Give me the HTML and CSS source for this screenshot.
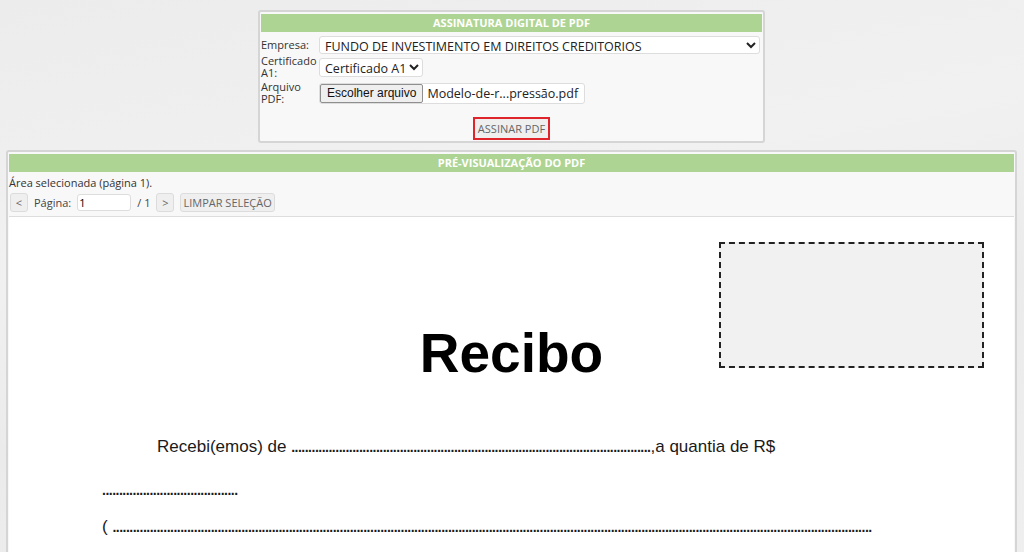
FILE: index.html
```html
<!DOCTYPE html>
<html lang="pt-BR">

<head>
    <meta charset="UTF-8">
    <meta name="viewport" content="width=device-width, initial-scale=1.0">
    <title>Assinatura Digital de PDF</title>
    <link rel="stylesheet" href="styles.css">
</head>

<body>
    <div class="panel sign-panel">
        <div class="panel-title">ASSINATURA DIGITAL DE PDF</div>
        <form id="signForm" class="sign-form">
            <label for="empresa">Empresa:</label>
            <div class="field">
                <select id="empresa" class="select-wide">
                    <option>FUNDO DE INVESTIMENTO EM DIREITOS CREDITORIOS</option>
                </select>
            </div>

            <label for="certificado">Certificado A1:</label>
            <div class="field">
                <select id="certificado">
                    <option>Certificado A1</option>
                </select>
            </div>

            <label for="arquivo">Arquivo PDF:</label>
            <div class="field">
                <div class="file-input">
                    <span class="file-btn">Escolher arquivo</span>
                    <span class="file-name">Modelo-de-r...pressão.pdf</span>
                </div>
            </div>
        </form>
        <div class="sign-action">
            <button type="submit" form="signForm" class="btn btn-sign">ASSINAR PDF</button>
        </div>
    </div>

    <div class="panel preview-panel">
        <div class="panel-title">PRÉ-VISUALIZAÇÃO DO PDF</div>
        <div class="status">Área selecionada (página 1).</div>
        <div class="toolbar">
            <button class="btn btn-nav">&lt;</button>
            <span>Página:</span>
            <input type="text" class="page-input" value="1">
            <span>/ 1</span>
            <button class="btn btn-nav">&gt;</button>
            <button class="btn">LIMPAR SELEÇÃO</button>
        </div>

        <div class="pdf-page">
            <div class="selection"></div>
            <h1 class="doc-title">Recibo</h1>
            <p class="doc-text">Recebi(emos) de <span class="dots">..........................................................................................................</span>,a quantia de R$</p>
            <p class="doc-text line-2"><span class="dots">........................................</span></p>
            <p class="doc-text line-3">( <span class="dots">................................................................................................................................................................................................................................</span></p>
        </div>
    </div>

    <script>
        // assinatura: só evita o envio real enquanto nada está ligado ao backend
        document.getElementById('signForm').addEventListener('submit', function (event) {
            event.preventDefault();
        });
    </script>
</body>

</html>
```

FILE: styles.css
```css
body {
    margin: 0;
    padding: 10px 0 0;
    font-family: "Open Sans", "Noto Sans", sans-serif;
    font-size: 11px;
    color: #333;
    background-color: #ededed;
    background-image: linear-gradient(170deg, #ececec 0%, #f1f1f1 35%, #ebebeb 60%, #efefef 100%);
    overflow: hidden;
}

.panel {
    background-color: #f8f8f8;
    border: 2px solid #d5d5d5;
    border-radius: 3px;
    padding: 2px 1px 0;
}

.panel-title {
    background-color: #aed494;
    color: #fff;
    font-weight: bold;
    font-size: 11px;
    height: 18px;
    line-height: 18px;
    text-align: center;
}

/* painel de assinatura */
.sign-panel {
    width: 501px;
    margin-left: 258px;
    padding-bottom: 1px;
}

.sign-form {
    display: grid;
    grid-template-columns: 58px 1fr;
    grid-template-rows: 17px 24px 24px;
    row-gap: 2px;
    margin-top: 4px;
}

.sign-form label {
    line-height: 12px;
    color: #333;
    display: flex;
    align-items: center;
}

.field {
    display: flex;
    align-items: center;
}

select {
    font-family: "Open Sans", "Noto Sans", sans-serif;
    font-size: 12.5px;
    line-height: 16px;
    color: #222;
    background-color: #fff;
    border: 1px solid #ddd;
    border-radius: 3px;
    height: 18px;
    padding: 0 0 0 1px;
}

.select-wide {
    width: 441px;
}

#certificado {
    width: 104px;
    height: 19px;
}

.file-input {
    display: flex;
    align-items: center;
    width: 264px;
    height: 19px;
    background-color: #fff;
    border: 1px solid #ddd;
    border-radius: 3px;
}

.file-btn {
    font-family: "Liberation Sans", Arial, sans-serif;
    font-size: 12px;
    color: #111;
    background-color: #efefef;
    border: 1px solid #8f8f8f;
    border-radius: 2px;
    height: 19px;
    line-height: 17px;
    padding: 0 6px;
    box-sizing: border-box;
}

.file-name {
    font-size: 12.5px;
    color: #222;
    margin-left: 4px;
}

.sign-action {
    text-align: center;
    padding-top: 12px;
}

.btn {
    font-family: "Open Sans", "Noto Sans", sans-serif;
    font-size: 11px;
    color: #666;
    background-color: #efefef;
    border: 1px solid #dcdcdc;
    border-radius: 3px;
    height: 19px;
    padding: 0 2px;
    cursor: pointer;
}

.btn-sign {
    height: 23px;
    padding: 0 3px;
    border: 2px solid #e0242b;
    border-radius: 0;
}

/* pré-visualização */
.preview-panel {
    margin: 7px 7px 0 6px;
    height: 420px;
    overflow: hidden;
}

.status {
    color: #333;
    margin-top: 4px;
    line-height: 13px;
}

.toolbar {
    display: flex;
    align-items: center;
    gap: 6px;
    margin: 4px 0 4px 1px;
    color: #444;
}

.btn-nav {
    width: 18px;
    padding: 0;
}

.page-input {
    width: 50px;
    height: 15px;
    padding: 0 1px;
    border: 1px solid #ddd;
    border-radius: 3px;
    font-family: inherit;
    font-size: 11px;
}

.pdf-page {
    position: relative;
    background-color: #fff;
    border-top: 1px solid #ddd;
    height: 400px;
    font-family: "Liberation Sans", Arial, sans-serif;
    color: #1a1a1a;
}

.selection {
    position: absolute;
    left: 710px;
    top: 25px;
    width: 261px;
    height: 122px;
    background-color: #f1f1f1;
    border: 2px dashed #222;
}

.doc-title {
    margin: 0;
    padding-top: 106px;
    text-align: center;
    font-size: 55px;
    font-weight: bold;
    color: #000;
    line-height: 60px;
}

.doc-text {
    margin: 54px 0 0;
    padding-left: 93px;
    text-indent: 55px;
    font-size: 17px;
    line-height: 20px;
    white-space: nowrap;
}

.line-2 {
    text-indent: 0;
    margin-top: 23px;
}

.line-3 {
    text-indent: 0;
    margin-top: 17px;
}

/* pontilhado do formulário impresso */
.dots {
    font-size: 14px;
    font-weight: bold;
    letter-spacing: -0.5px;
}
```
